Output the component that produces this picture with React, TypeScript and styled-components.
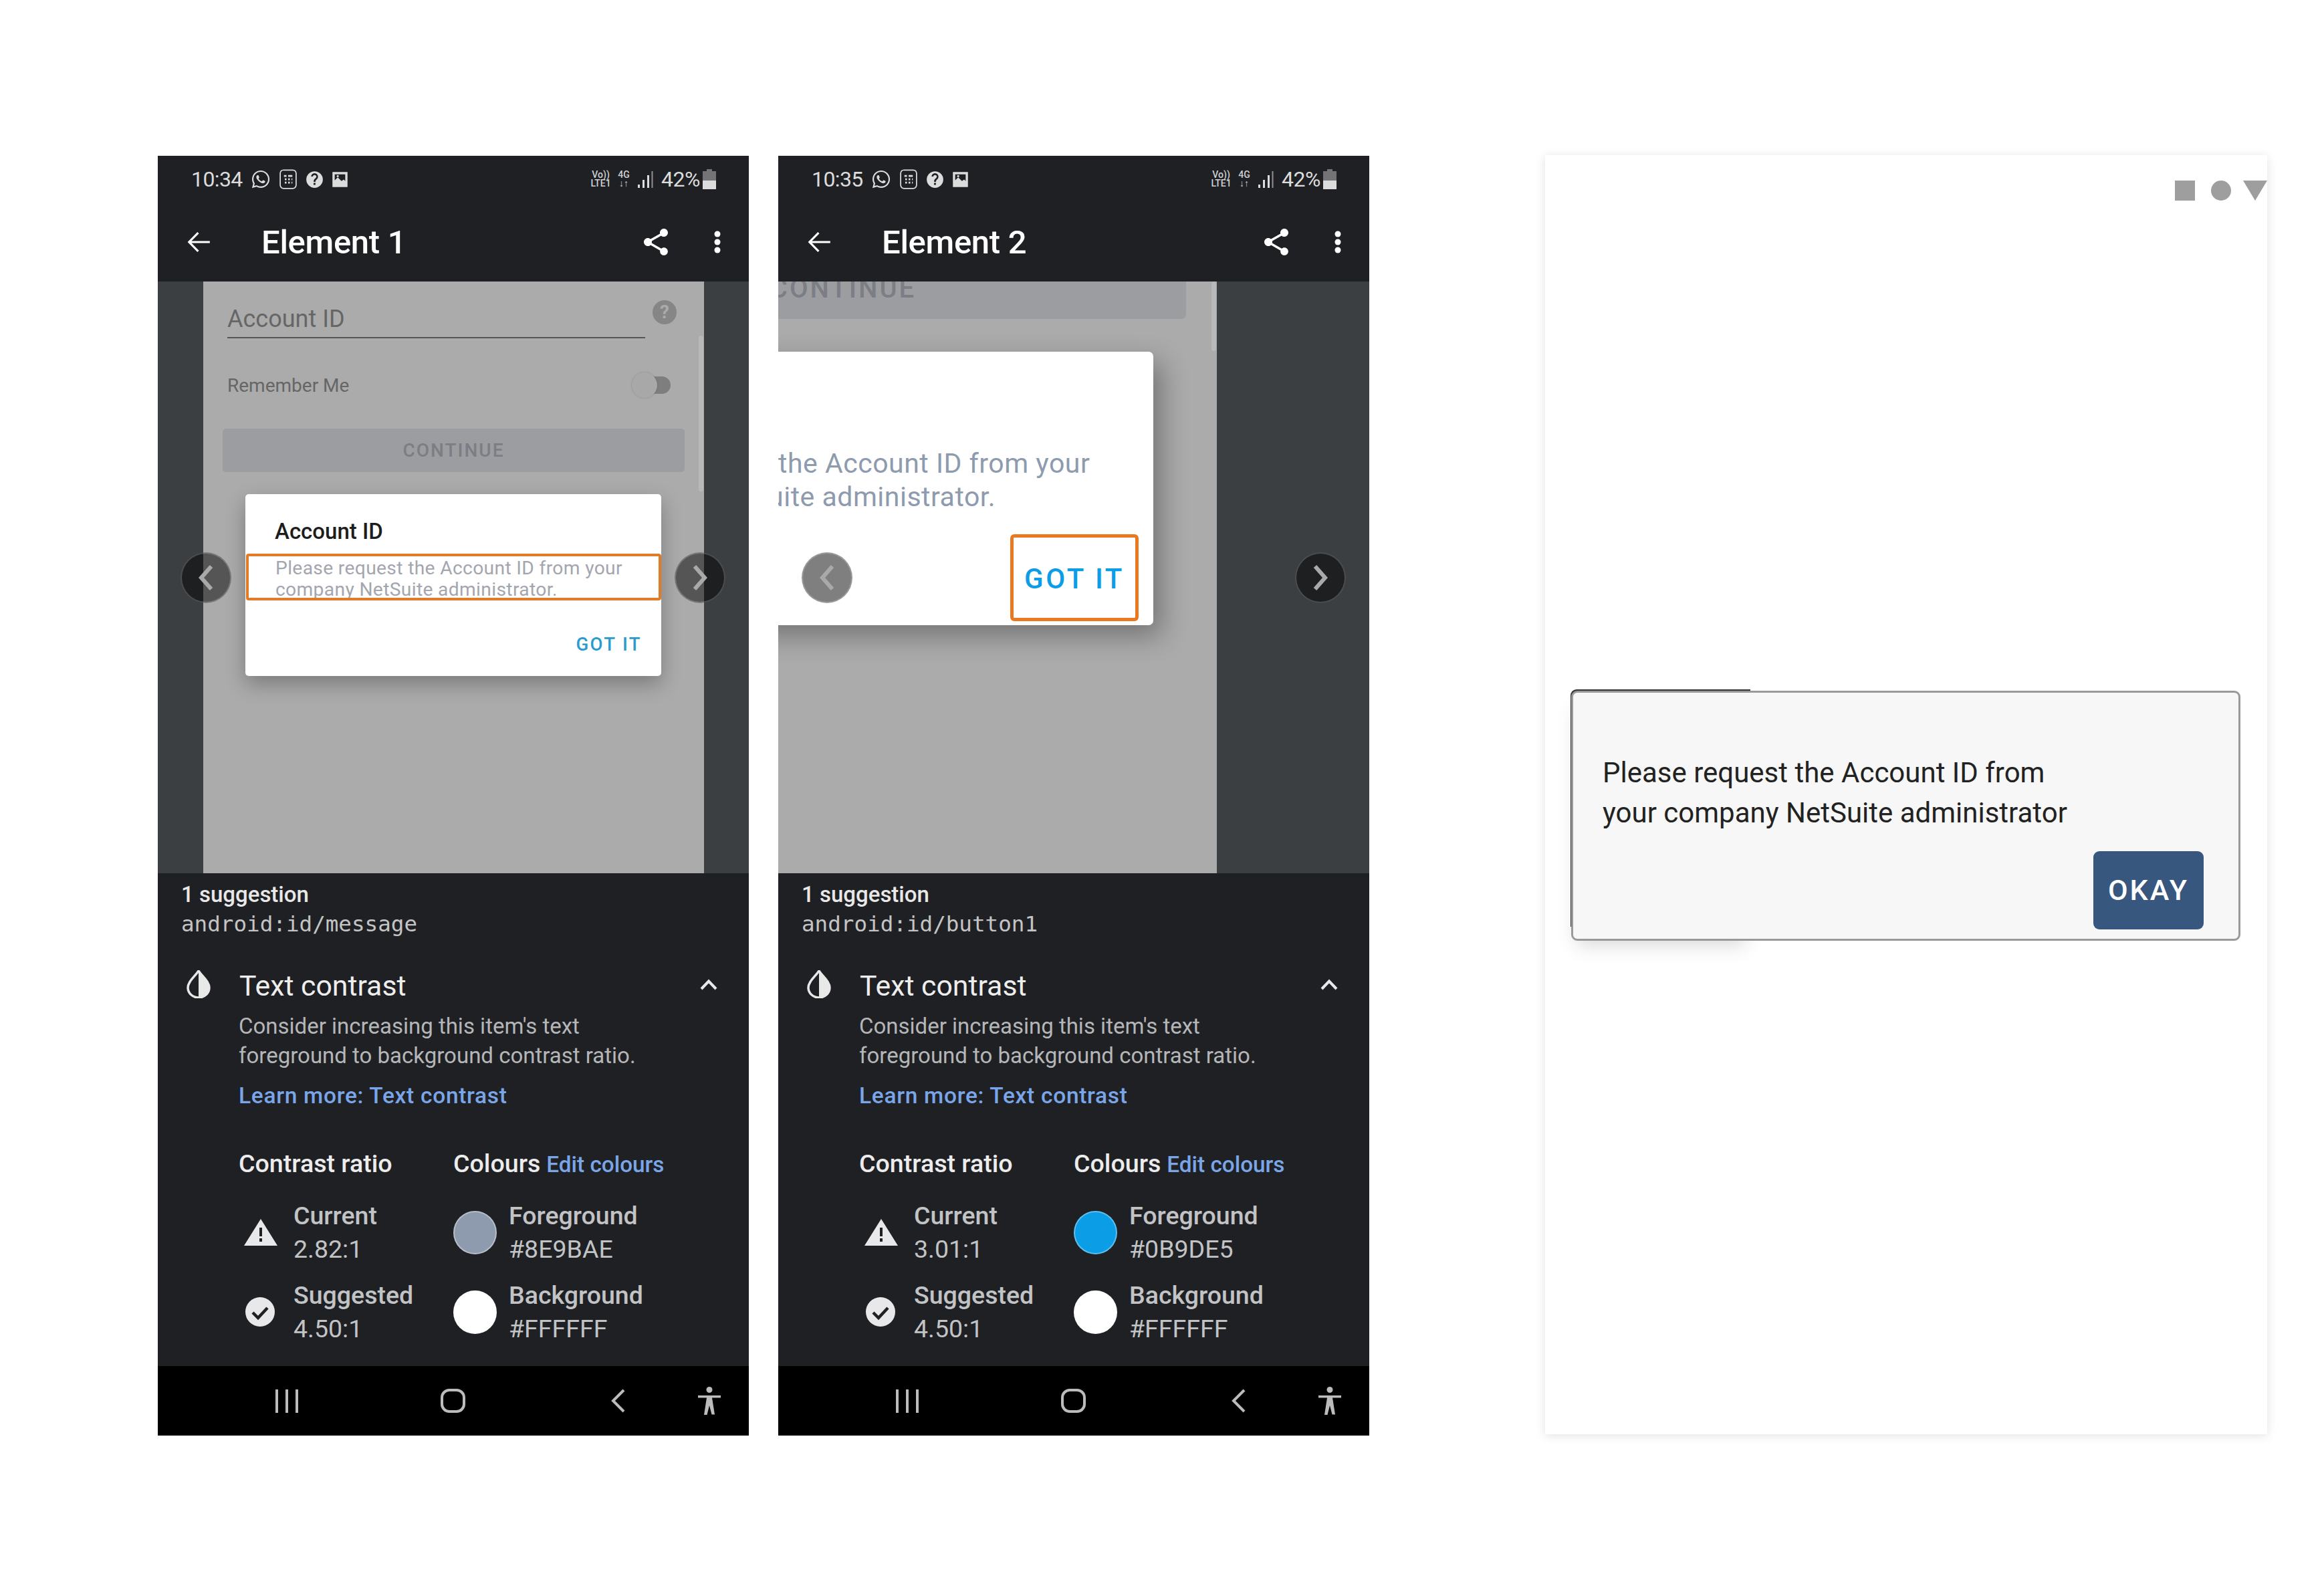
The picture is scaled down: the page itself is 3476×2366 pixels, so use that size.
import React from "react";
import styled, { createGlobalStyle } from "styled-components";
import { FaWhatsapp } from "react-icons/fa";

const Global = createGlobalStyle`
  html, body { margin: 0; padding: 0; background: #fff; }
  * { box-sizing: border-box; }
`;

const Page = styled.div`
  width: 3476px;
  height: 2366px;
  background: #fff;
  padding: 233px 0 0 236px;
  display: flex;
  align-items: flex-start;
  font-family: Roboto, "Liberation Sans", sans-serif;
  overflow: hidden;
`;

const Phone = styled.section`
  width: 884px;
  height: 1914px;
  display: flex;
  flex-direction: column;
  background: #1f2024;
  margin-right: 44px;
  flex: none;
`;

const StatusBar = styled.div`
  height: 70px;
  display: flex;
  align-items: center;
  padding: 0 49px 0 50px;
  color: #dcdcdc;
  flex: none;
`;
const Time = styled.span`
  font-size: 32px;
  letter-spacing: -0.6px;
  width: 89px;
`;
const StatusIcons = styled.div`
  display: flex;
  align-items: center;
  gap: 11px;
`;
const Spacer = styled.div`
  flex: 1;
`;
const NetLabel = styled.span`
  font-size: 14px;
  line-height: 13px;
  font-weight: 500;
  text-align: center;
  color: #d0d0d0;
  width: 33px;
  margin-right: 7px;
`;
const NetFour = styled(NetLabel)`
  width: 22px;
  margin-right: 9px;
`;
const Percent = styled.span`
  font-size: 32px;
  letter-spacing: -0.5px;
  margin: 0 4px 0 12px;
`;

const AppBar = styled.header`
  height: 118px;
  display: flex;
  align-items: center;
  padding: 0 42px 0 43px;
  color: #fff;
  flex: none;
`;
const Title = styled.h1`
  margin: 0 0 0 74px;
  font-size: 49px;
  font-weight: 500;
  letter-spacing: -0.3px;
  flex: 1;
`;
const BarIcons = styled.div`
  display: flex;
  align-items: center;
  gap: 63px;
`;

const Content = styled.div`
  position: relative;
  height: 885px;
  display: flex;
  background: #3c3f42;
  flex: none;
  overflow: hidden;
`;
const Band = styled.div<{ $w: number }>`
  width: ${(p) => p.$w}px;
  flex: none;
`;
const Screen = styled.div<{ $w: number }>`
  position: relative;
  width: ${(p) => p.$w}px;
  flex: none;
  background: #ababab;
  overflow: hidden;
`;
const ScrollThumb = styled.div<{ $top: number; $h: number }>`
  position: absolute;
  top: ${(p) => p.$top}px;
  right: 1px;
  width: 7px;
  height: ${(p) => p.$h}px;
  border-radius: 4px;
  background: #b9b9b9;
`;

const FieldRow = styled.div`
  display: flex;
  margin: 28px 0 0 36px;
`;
const Field = styled.div`
  width: 625px;
  height: 57px;
  border-bottom: 2px solid #555;
  font-size: 36px;
  line-height: 56px;
  color: #666;
`;
const HelpDot = styled.div`
  width: 36px;
  height: 36px;
  margin-left: 11px;
  border-radius: 50%;
  background: #868686;
  color: #ababab;
  font-size: 28px;
  font-weight: 700;
  line-height: 36px;
  text-align: center;
`;
const ToggleRow = styled.div`
  display: flex;
  align-items: center;
  justify-content: space-between;
  width: 663px;
  margin: 50px 0 0 36px;
  height: 40px;
  font-size: 28px;
  color: #666;
`;
const Toggle = styled.div`
  position: relative;
  width: 57px;
  height: 26px;
  border-radius: 13px;
  background: #7e7e7e;
`;
const Knob = styled.div`
  position: absolute;
  left: -1px;
  top: -6px;
  width: 38px;
  height: 38px;
  border-radius: 50%;
  background: #a8a8a8;
  box-shadow: 0 0 3px rgba(0, 0, 0, 0.18);
`;
const Continue = styled.div`
  width: 691px;
  height: 65px;
  margin: 45px 0 0 29px;
  border-radius: 5px;
  background: #9c9da0;
  color: #7b7e85;
  font-size: 28px;
  font-weight: 500;
  letter-spacing: 2px;
  line-height: 65px;
  text-align: center;
`;
const BigContinue = styled(Continue)`
  width: 1026px;
  height: 90px;
  margin: -34px 0 0 -416px;
  border-radius: 7px;
  font-size: 40px;
  letter-spacing: 3px;
  line-height: 90px;
`;
const Dialog = styled.div`
  position: relative;
  width: 622px;
  height: 272px;
  margin: 33px 0 0 63px;
  background: #fff;
  border-radius: 5px;
  box-shadow: 0 12px 30px rgba(0, 0, 0, 0.28);
  display: flex;
  flex-direction: column;
`;
const BigDialog = styled(Dialog)`
  width: 846px;
  height: 409px;
  margin: 49px 0 0 -285px;
  border-radius: 7px;
  box-shadow: 12px 16px 40px rgba(0, 0, 0, 0.32);
`;
const DialogTitle = styled.div`
  margin: 36px 0 0 44px;
  font-size: 33px;
  line-height: 40px;
  font-weight: 500;
  color: #1d1d1d;
`;
const Message = styled.div`
  height: 70px;
  margin: 13px 0 0 1px;
  padding: 2px 0 0 40px;
  border: 4px solid #e07b28;
  border-radius: 4px;
  font-size: 28.2px;
  line-height: 32px;
  letter-spacing: 0.35px;
  color: #a3a6ae;
  overflow: hidden;
  white-space: nowrap;
`;
const BigMessage = styled.div`
  margin: 142px 0 0 -3px;
  font-size: 41px;
  line-height: 50px;
  letter-spacing: 0.5px;
  color: #8e9bae;
  white-space: nowrap;
`;
const GotIt = styled.div`
  margin: 50px 29px 0 auto;
  font-size: 27.5px;
  font-weight: 500;
  letter-spacing: 2.4px;
  line-height: 32px;
  color: #2a9bd0;
`;
const BigGotIt = styled.div`
  position: absolute;
  left: 632px;
  top: 273px;
  width: 192px;
  height: 130px;
  padding-top: 2px;
  border: 5px solid #e8791e;
  border-radius: 6px;
  display: flex;
  align-items: center;
  justify-content: center;
  font-size: 42px;
  font-weight: 500;
  letter-spacing: 3.6px;
  color: #0b9de5;
`;
const NavCircle = styled.div<{ $left: number }>`
  position: absolute;
  left: ${(p) => p.$left}px;
  top: 405px;
  width: 76px;
  height: 76px;
  border-radius: 50%;
  background: rgba(0, 0, 0, 0.5);
  border: 2px solid rgba(255, 255, 255, 0.2);
  display: flex;
  align-items: center;
  justify-content: center;
`;

const Panel = styled.div`
  height: 737px;
  padding: 12px 0 0 35px;
  flex: none;
  color: #e8e8e8;
`;
const SuggestionTitle = styled.div`
  font-size: 33px;
  line-height: 40px;
  font-weight: 500;
`;
const ViewId = styled.div`
  margin-top: 2px;
  font-family: "DejaVu Sans Mono", "Liberation Mono", monospace;
  font-size: 32.6px;
  line-height: 44px;
  color: #c4c4c4;
`;
const IssueHead = styled.div`
  display: flex;
  align-items: center;
  height: 50px;
  margin-top: 45px;
  padding: 0 47px 0 8px;
`;
const IssueTitle = styled.div`
  margin-left: 43px;
  flex: 1;
  font-size: 42.8px;
  color: #eee;
`;
const IssueGlyph = styled.div`
  margin-bottom: 4px;
  display: flex;
`;
const IssueBody = styled.div`
  margin-left: 86px;
`;
const Desc = styled.div`
  margin-top: 14px;
  font-size: 33px;
  line-height: 44px;
  color: #b5b6b8;
`;
const Learn = styled.div`
  margin-top: 16px;
  font-size: 33.5px;
  line-height: 44px;
  font-weight: 500;
  letter-spacing: 0.7px;
  color: #7aa6e8;
`;
const Metrics = styled.div`
  display: grid;
  grid-template-columns: 321px 1fr;
  margin-top: 57px;
`;
const Head = styled.div`
  font-size: 37.6px;
  line-height: 44px;
  font-weight: 500;
  color: #ececec;
  white-space: nowrap;
`;
const EditLink = styled.span`
  margin-left: 9px;
  font-size: 33.3px;
  color: #7aa6e8;
`;
const MetricRow = styled.div<{ $first?: boolean }>`
  display: flex;
  align-items: center;
  margin-top: ${(p) => (p.$first ? 29 : 19)}px;
`;
const IconCell = styled.div<{ $w: number; $inset?: number }>`
  width: ${(p) => p.$w}px;
  padding-left: ${(p) => p.$inset ?? 0}px;
  flex: none;
  display: flex;
  align-items: center;
`;
const Swatch = styled.div<{ $c: string }>`
  width: 65px;
  height: 65px;
  border-radius: 50%;
  background: ${(p) => p.$c};
  border: 2px solid rgba(255, 255, 255, 0.35);
`;
const MetricText = styled.div`
  font-size: 37.5px;
  line-height: 50px;
  color: #c2c3c5;
  white-space: nowrap;
`;
const MetricLabel = styled.div`
  font-weight: 500;
`;

const NavBar = styled.nav`
  height: 104px;
  background: #000;
  flex: none;
  display: flex;
  align-items: center;
  color: #bcbcbc;
`;
const NavSlot = styled.div<{ $gap: number }>`
  width: 110px;
  margin-left: ${(p) => p.$gap}px;
  flex: none;
  display: flex;
  justify-content: center;
`;

const Blank = styled.section`
  width: 1080px;
  height: 1913px;
  margin-left: 219px;
  margin-top: -1px;
  padding-top: 38px;
  background: #fff;
  box-shadow: 0 2px 14px rgba(0, 0, 0, 0.12);
  flex: none;
`;
const Shapes = styled.div`
  height: 30px;
  display: flex;
  justify-content: flex-end;
`;
const AlertWrap = styled.div`
  position: relative;
  isolation: isolate;
  width: 1001px;
  height: 374px;
  margin: 733px 0 0 39px;
  &::before {
    content: "";
    position: absolute;
    z-index: -1;
    left: -1px;
    top: -2px;
    width: 266px;
    height: 352px;
    border-top: 3px solid #333;
    border-left: 3px solid #333;
    border-radius: 9px 0 0 0;
  }
  &::after {
    content: "";
    position: absolute;
    z-index: -2;
    left: 12px;
    top: 14px;
    width: 252px;
    height: 352px;
    box-shadow: -4px 14px 28px rgba(0, 0, 0, 0.16);
  }
`;
const AlertBox = styled.div`
  width: 100%;
  height: 100%;
  padding: 90px 52px 14px 44px;
  display: flex;
  flex-direction: column;
  background: #f7f7f7;
  border: 3px solid #9a9a9a;
  border-radius: 9px;
`;
const AlertText = styled.div`
  font-size: 42px;
  line-height: 60px;
  color: #222;
`;
const Okay = styled.div`
  margin-top: auto;
  align-self: flex-end;
  width: 165px;
  height: 117px;
  border-radius: 9px;
  background: #38577f;
  color: #fff;
  font-size: 43px;
  font-weight: 500;
  letter-spacing: 3px;
  line-height: 117px;
  text-align: center;
`;

const Ic = ({ w, h, vb = "0 0 24 24", children, stroke }: any) => (
  <svg
    width={w}
    height={h}
    viewBox={vb}
    fill={stroke ? "none" : "currentColor"}
    stroke={stroke ? "currentColor" : undefined}
    style={{ display: "block", flex: "none" }}
  >
    {children}
  </svg>
);

const StatusLeftIcons = () => (
  <StatusIcons>
    <FaWhatsapp size={30} />
    <Ic w={30} h={30} stroke>
      <rect x="2.5" y="1" width="19" height="22" rx="4" strokeWidth="1.4" />
      <path d="M7 8h3M12 8h5M8 12h2M12 12h2M16 12h1M8 16h2M12 16h2M16 16h1" strokeWidth="2.2" />
    </Ic>
    <Ic w={27} h={27}>
      <path d="M12 1a11 11 0 1 0 0 22 11 11 0 0 0 0-22zm1.2 18h-2.5v-2.5h2.5V19zm2.6-8.2-1.1 1.1c-.9.9-1.5 1.6-1.5 3.2h-2.4v-.6c0-1.3.5-2.4 1.4-3.3l1.5-1.5c.4-.4.7-1 .7-1.6 0-1.2-1-2.2-2.3-2.2S9.7 6.9 9.7 8.1H7.4a4.6 4.6 0 0 1 9.2 0c0 1.1-.3 2-.8 2.7z" />
    </Ic>
    <Ic w={27} h={27}>
      <path d="M2 2h20v20H2V2zm3 3v8l4-4 5 5 3-2 2 2V5H5z" />
      <circle cx="9" cy="7.5" r="1.4" />
    </Ic>
  </StatusIcons>
);

const Signal = () => (
  <Ic w={24} h={27} vb="0 0 24 27">
    <rect x="1" y="21" width="3" height="5" />
    <rect x="8" y="14" width="3" height="12" />
    <rect x="15" y="7" width="3" height="19" />
    <rect x="21.5" y="1" width="2" height="25" opacity=".6" />
  </Ic>
);
const Battery = () => (
  <Ic w={20} h={30} vb="0 0 20 30">
    <path d="M6 0h8v3h6v27H0V3h6z" opacity=".45" />
    <path d="M0 17h20v13H0z" />
  </Ic>
);
const ArrowBack = () => (
  <Ic w={38} h={38} stroke>
    <path d="M22 12H2.5M11 3.2 2.4 12l8.6 8.8" strokeWidth="2" />
  </Ic>
);
const ShareIcon = () => (
  <Ic w={48} h={48}>
    <path d="M18 16.08c-.76 0-1.44.3-1.96.77L8.91 12.7c.05-.23.09-.46.09-.7s-.04-.47-.09-.7l7.05-4.11c.54.5 1.25.81 2.04.81 1.66 0 3-1.34 3-3s-1.34-3-3-3-3 1.34-3 3c0 .24.04.47.09.7L8.04 9.81C7.5 9.31 6.79 9 6 9c-1.66 0-3 1.34-3 3s1.34 3 3 3c.79 0 1.5-.31 2.04-.81l7.12 4.16c-.05.21-.08.43-.08.65 0 1.61 1.31 2.92 2.92 2.92 1.61 0 2.92-1.31 2.92-2.92s-1.31-2.92-2.92-2.92z" />
  </Ic>
);
const Dots = () => (
  <Ic w={10} h={34} vb="0 0 10 34">
    <circle cx="5" cy="5" r="4.5" />
    <circle cx="5" cy="17" r="4.5" />
    <circle cx="5" cy="29" r="4.5" />
  </Ic>
);
const Chevron = ({ dir }: { dir: "left" | "right" }) => (
  <svg width="24" height="40" viewBox="0 0 24 40" fill="none" stroke="#a9a9a9" strokeWidth="6" style={{ display: "block" }}>
    <path d={dir === "left" ? "M20 3 5 20l15 17" : "M4 3l15 17L4 37"} />
  </svg>
);
const DropIcon = () => (
  <Ic w={36} h={42} vb="0 0 36 42">
    <path d="M18 1C12 10 2 17 2 26.5A16 15 0 0 0 18 41a16 15 0 0 0 16-14.500C34 17 24 10 18 1z" fill="none" stroke="currentColor" strokeWidth="3.500" />
    <path d="M18 1c6 9 16 16 16 25.500A16 15 0 0 1 18 41z" />
  </Ic>
);
const ChevronUp = () => (
  <Ic w={26} h={17} vb="0 0 26 17" stroke>
    <path d="M2 15 13 3.500 24 15" strokeWidth="4" />
  </Ic>
);
const Warn = () => (
  <Ic w={50} h={40} vb="0 0 50 40">
    <path fillRule="evenodd" d="M25 0 50 40H0zM23 13v13h4V13zm0 16v5h4v-5z" fill="#e8e8ea" />
  </Ic>
);
const Check = () => (
  <svg width="44" height="44" viewBox="0 0 44 44" style={{ display: "block" }}>
    <circle cx="22" cy="22" r="22" fill="#e8e8ea" />
    <path d="M11 23l8 8 14-15" fill="none" stroke="#1f2024" strokeWidth="4.500" />
  </svg>
);
const Bars = () => (
  <Ic w={34} h={35} vb="0 0 34 35">
    <rect x="0" y="0" width="4" height="35" />
    <rect x="15" y="0" width="4" height="35" />
    <rect x="30" y="0" width="4" height="35" />
  </Ic>
);
const HomeSquare = () => (
  <Ic w={37} h={36} vb="0 0 37 36" stroke>
    <rect x="2" y="2" width="33" height="32" rx="11" strokeWidth="4" />
  </Ic>
);
const NavBack = () => (
  <Ic w={22} h={36} vb="0 0 22 36" stroke>
    <path d="M19 2 3 18l16 16" strokeWidth="4" />
  </Ic>
);
const Access = () => (
  <Ic w={36} h={42} vb="0 0 36 42">
    <circle cx="18" cy="4.500" r="4.500" />
    <path d="M1 13h34v3.500H22l4 25h-4.500L18 28l-3.500 14H10l4-25.500H1z" />
  </Ic>
);

type Data = {
  time: string;
  title: string;
  id: string;
  ratio: string;
  fg: string;
  fgHex: string;
  screen: React.ReactNode;
};

const Device = ({ time, title, id, ratio, fg, fgHex, screen }: Data) => (
  <Phone>
    <StatusBar>
      <Time>{time}</Time>
      <StatusLeftIcons />
      <Spacer />
      <NetLabel>
        Vo))
        <br />
        LTE1
      </NetLabel>
      <NetFour>
        4G
        <br />
        ↓↑
      </NetFour>
      <Signal />
      <Percent>42%</Percent>
      <Battery />
    </StatusBar>
    <AppBar>
      <ArrowBack />
      <Title>{title}</Title>
      <BarIcons>
        <ShareIcon />
        <Dots />
      </BarIcons>
    </AppBar>
    {screen}
    <Panel>
      <SuggestionTitle>1 suggestion</SuggestionTitle>
      <ViewId>{id}</ViewId>
      <IssueHead>
        <IssueGlyph>
          <DropIcon />
        </IssueGlyph>
        <IssueTitle>Text contrast</IssueTitle>
        <IssueGlyph>
          <ChevronUp />
        </IssueGlyph>
      </IssueHead>
      <IssueBody>
        <Desc>
          Consider increasing this item's text
          <br />
          foreground to background contrast ratio.
        </Desc>
        <Learn>Learn more: Text contrast</Learn>
        <Metrics>
          <Head>Contrast ratio</Head>
          <Head>
            Colours<EditLink>Edit colours</EditLink>
          </Head>
          <MetricRow $first>
            <IconCell $w={82} $inset={8}>
              <Warn />
            </IconCell>
            <MetricText>
              <MetricLabel>Current</MetricLabel>
              {ratio}
            </MetricText>
          </MetricRow>
          <MetricRow $first>
            <IconCell $w={83}>
              <Swatch $c={fg} />
            </IconCell>
            <MetricText>
              <MetricLabel>Foreground</MetricLabel>
              {fgHex}
            </MetricText>
          </MetricRow>
          <MetricRow>
            <IconCell $w={82} $inset={10}>
              <Check />
            </IconCell>
            <MetricText>
              <MetricLabel>Suggested</MetricLabel>
              4.50:1
            </MetricText>
          </MetricRow>
          <MetricRow>
            <IconCell $w={83}>
              <Swatch $c="#fff" />
            </IconCell>
            <MetricText>
              <MetricLabel>Background</MetricLabel>
              #FFFFFF
            </MetricText>
          </MetricRow>
        </Metrics>
      </IssueBody>
    </Panel>
    <NavBar>
      <NavSlot $gap={138}>
        <Bars />
      </NavSlot>
      <NavSlot $gap={138}>
        <HomeSquare />
      </NavSlot>
      <NavSlot $gap={138}>
        <NavBack />
      </NavSlot>
      <NavSlot $gap={26}>
        <Access />
      </NavSlot>
    </NavBar>
  </Phone>
);

const FirstScreen = (
  <Content>
    <Band $w={68} />
    <Screen $w={749}>
      <FieldRow>
        <Field>Account ID</Field>
        <HelpDot>?</HelpDot>
      </FieldRow>
      <ToggleRow>
        Remember Me
        <Toggle>
          <Knob />
        </Toggle>
      </ToggleRow>
      <Continue>CONTINUE</Continue>
      <Dialog>
        <DialogTitle>Account ID</DialogTitle>
        <Message>
          Please request the Account ID from your
          <br />
          company NetSuite administrator.
        </Message>
        <GotIt>GOT IT</GotIt>
      </Dialog>
      <ScrollThumb $top={81} $h={233} />
    </Screen>
    <Band $w={67} />
    <NavCircle $left={34}>
      <Chevron dir="left" />
    </NavCircle>
    <NavCircle $left={773}>
      <Chevron dir="right" />
    </NavCircle>
  </Content>
);

const SecondScreen = (
  <Content>
    <Screen $w={656}>
      <BigContinue>CONTINUE</BigContinue>
      <BigDialog>
        <BigMessage>
          Please request the Account ID from your
          <br />
          company NetSuite administrator.
        </BigMessage>
        <BigGotIt>GOT IT</BigGotIt>
      </BigDialog>
      <ScrollThumb $top={0} $h={104} />
    </Screen>
    <Band $w={228} />
    <NavCircle $left={35}>
      <Chevron dir="left" />
    </NavCircle>
    <NavCircle $left={773}>
      <Chevron dir="right" />
    </NavCircle>
  </Content>
);

export default function App() {
  return (
    <Page>
      <Global />
      <Device
        time="10:34"
        title="Element 1"
        id="android:id/message"
        ratio="2.82:1"
        fg="#8E9BAE"
        fgHex="#8E9BAE"
        screen={FirstScreen}
      />
      <Device
        time="10:35"
        title="Element 2"
        id="android:id/button1"
        ratio="3.01:1"
        fg="#0B9DE5"
        fgHex="#0B9DE5"
        screen={SecondScreen}
      />
      <Blank>
        <Shapes>
          <svg width="138" height="30" viewBox="0 0 138 30" fill="#9e9e9e" style={{ display: "block" }}>
            <rect x="0" y="0" width="30" height="30" />
            <circle cx="69" cy="15" r="15" />
            <path d="M102 0h36L120 30z" />
          </svg>
        </Shapes>
        <AlertWrap>
          <AlertBox>
            <AlertText>
              Please request the Account ID from
              <br />
              your company NetSuite administrator
            </AlertText>
            <Okay>OKAY</Okay>
          </AlertBox>
        </AlertWrap>
      </Blank>
    </Page>
  );
}
